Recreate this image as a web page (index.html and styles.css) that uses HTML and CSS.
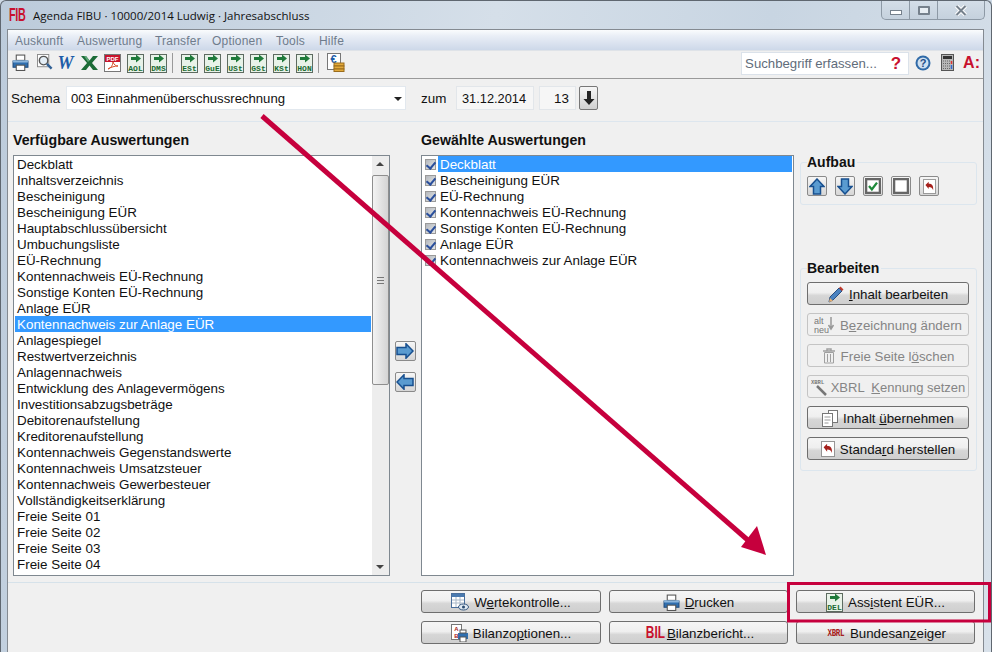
FILE: index.html
```html
<!DOCTYPE html>
<html lang="de">
<head>
    <meta charset="UTF-8">
    <title>Agenda FIBU</title>
    <link rel="stylesheet" href="styles.css">
</head>
<body>
    <svg class="defs" width="0" height="0">
        <symbol id="printer" viewBox="0 0 16 16">
            <rect x="4" y="1" width="8" height="5" fill="#fff" stroke="#555"/>
            <path d="M1 6.5h14v6H1z" fill="#2f6fb0" stroke="#1d4a7c"/>
            <rect x="1" y="6" width="14" height="2" fill="#8db6dc"/>
            <rect x="4" y="10.5" width="8" height="5" fill="#fff" stroke="#555"/>
        </symbol>
        <symbol id="box-arrow" viewBox="0 0 17 20">
            <rect x="0.5" y="1.5" width="16" height="18" fill="#e8f2e8" stroke="#5d6b60"/>
            <path d="M4 4h5V1.5L14 5.5 9 9.500V7H4z" fill="#1f7a3a"/>
        </symbol>
        <symbol id="undo" viewBox="0 0 16 18">
            <rect x="0.500" y="0.500" width="15" height="17" fill="#fff" stroke="#888"/>
            <path d="M3 7l4-4v2.500c4 0 6 2 5.500 8-1-3-2.500-4-5.500-4V12z" fill="#a5201c"/>
        </symbol>
    </svg>

    <div class="window">
        <div class="titlebar">
            <span class="fib">FIB</span>
            <span class="title">Agenda FIBU · 10000/2014 Ludwig · Jahresabschluss</span>
            <div class="win-btns">
                <span class="win-btn"><i class="min"></i></span>
                <span class="win-btn"><i class="max"></i></span>
                <span class="win-btn close">
                    <svg width="12" height="11" viewBox="0 0 12 11"><path d="M1.500 1l9 9M10.500 1l-9 9" stroke="#fff" stroke-width="4"/><path d="M1.500 1l9 9M10.500 1l-9 9" stroke="#76818c" stroke-width="2"/></svg>
                </span>
            </div>
        </div>

        <div class="client">
            <div class="menubar">
                <span class="m1">Auskunft</span>
                <span class="m2">Auswertung</span>
                <span class="m3">Transfer</span>
                <span class="m4">Optionen</span>
                <span class="m5">Tools</span>
                <span>Hilfe</span>
            </div>

            <div class="toolbar">
                <svg class="tool t-print" width="17" height="17"><use href="#printer"/></svg>
                <svg class="tool t-find" width="16" height="17" viewBox="0 0 17 18"><rect x="0.500" y="0.500" width="12" height="13" fill="#fff" stroke="#8a8a8a"/><circle cx="7" cy="7" r="4.500" fill="#e4eef6" stroke="#555" stroke-width="1.500"/><path d="M10.500 10.500l5 5" stroke="#2f5f94" stroke-width="2.500"/></svg>
                <span class="tool w-ico">W</span>
                <svg class="tool" width="17" height="16" viewBox="0 0 17 16"><path d="M0 1h5l3.500 4.500L12 1h5l-6 7 6 7h-5L8.500 10.500 5 15H0l6-7z" fill="#1c6b36"/><path d="M3 1h2l3.500 4.500L7 7z" fill="#5fa777"/></svg>
                <svg class="tool" width="17" height="18" viewBox="0 0 17 18"><rect x="0.500" y="0.500" width="16" height="17" fill="#fff" stroke="#777"/><rect x="1" y="1" width="15" height="7" fill="#c8142c"/><text x="8.500" y="7" class="pdf-txt">PDF</text><path d="M4 15c3-1 5-4 5-7 1 3 3 4 5 4-3 0-7 1-10 3z" fill="none" stroke="#d8502a"/></svg>
                <svg class="tool box" width="17" height="20"><use href="#box-arrow"/><text x="8.500" y="18" class="box-txt">AOL</text></svg>
                <svg class="tool box" width="17" height="20"><use href="#box-arrow"/><text x="8.500" y="18" class="box-txt">DMS</text></svg>
                <span class="tool-sep"></span>
                <svg class="tool box" width="17" height="20"><use href="#box-arrow"/><text x="8.500" y="18" class="box-txt">ESt</text></svg>
                <svg class="tool box" width="17" height="20"><use href="#box-arrow"/><text x="8.500" y="18" class="box-txt">GuE</text></svg>
                <svg class="tool box" width="17" height="20"><use href="#box-arrow"/><text x="8.500" y="18" class="box-txt">USt</text></svg>
                <svg class="tool box" width="17" height="20"><use href="#box-arrow"/><text x="8.500" y="18" class="box-txt">GSt</text></svg>
                <svg class="tool box" width="17" height="20"><use href="#box-arrow"/><text x="8.500" y="18" class="box-txt">KSt</text></svg>
                <svg class="tool box" width="17" height="20"><use href="#box-arrow"/><text x="8.500" y="18" class="box-txt">HON</text></svg>
                <span class="tool-sep"></span>
                <svg class="tool" width="18" height="19" viewBox="0 0 18 19"><rect x="0.500" y="0.500" width="13" height="16" fill="#fff" stroke="#777"/><text x="6.500" y="10" class="euro-txt">€</text><rect x="7" y="10" width="10" height="3" fill="#e2a93a" stroke="#9a6c1c"/><rect x="7" y="13" width="10" height="3" fill="#e2a93a" stroke="#9a6c1c"/><rect x="7" y="16" width="10" height="2.500" fill="#e2a93a" stroke="#9a6c1c"/></svg>

                <div class="search">
                    <span>Suchbegriff erfassen...</span>
                    <b>?</b>
                </div>
                <svg class="help" width="16" height="16" viewBox="0 0 16 16"><circle cx="8" cy="8" r="7.500" fill="#2f6aa8"/><circle cx="8" cy="8" r="5.500" fill="#cfe0f0"/><text x="8" y="12" class="help-txt">?</text></svg>
                <svg class="calc" width="13" height="17" viewBox="0 0 13 17"><rect x="0.500" y="0.500" width="12" height="16" fill="#b8b8b8" stroke="#555"/><rect x="2" y="2" width="9" height="3" fill="#333"/><path d="M2 7h7M2 9.500h7M2 12h7M2 14.500h7" stroke="#666" stroke-dasharray="1 1"/><path d="M10.500 7v3" stroke="#d33" stroke-width="1.500"/><path d="M10.500 11v4" stroke="#36c" stroke-width="1.500"/></svg>
                <span class="a-logo">A:</span>
            </div>

            <div class="schema-row">
                <label class="schema-label">Schema</label>
                <div class="select">003 Einnahmenüberschussrechnung<i></i></div>
                <label class="zum-label">zum</label>
                <div class="field date">31.12.2014</div>
                <div class="field num">13</div>
                <span class="down-btn">
                    <svg width="12" height="16" viewBox="0 0 12 16"><path d="M4 1h4v8h3.500L6 15 .5 9H4z" fill="#222"/></svg>
                </span>
            </div>

            <div class="main">
                <div class="col">
                    <h3>Verfügbare Auswertungen</h3>
                    <div class="listbox">
                        <ul class="items">
                            <li>Deckblatt</li>
                            <li>Inhaltsverzeichnis</li>
                            <li>Bescheinigung</li>
                            <li>Bescheinigung EÜR</li>
                            <li>Hauptabschlussübersicht</li>
                            <li>Umbuchungsliste</li>
                            <li>EÜ-Rechnung</li>
                            <li>Kontennachweis EÜ-Rechnung</li>
                            <li>Sonstige Konten EÜ-Rechnung</li>
                            <li>Anlage EÜR</li>
                            <li class="selected">Kontennachweis zur Anlage EÜR</li>
                            <li>Anlagespiegel</li>
                            <li>Restwertverzeichnis</li>
                            <li>Anlagennachweis</li>
                            <li>Entwicklung des Anlagevermögens</li>
                            <li>Investitionsabzugsbeträge</li>
                            <li>Debitorenaufstellung</li>
                            <li>Kreditorenaufstellung</li>
                            <li>Kontennachweis Gegenstandswerte</li>
                            <li>Kontennachweis Umsatzsteuer</li>
                            <li>Kontennachweis Gewerbesteuer</li>
                            <li>Vollständigkeitserklärung</li>
                            <li>Freie Seite 01</li>
                            <li>Freie Seite 02</li>
                            <li>Freie Seite 03</li>
                            <li>Freie Seite 04</li>
                        </ul>
                        <div class="scrollbar">
                            <span class="sb-up"></span>
                            <div class="sb-track">
                                <div class="sb-thumb"><i></i></div>
                            </div>
                            <span class="sb-down"></span>
                        </div>
                    </div>
                </div>

                <div class="move-btns">
                    <span class="icon-btn move">
                        <svg width="18" height="16" viewBox="0 0 18 16"><path d="M1 4.500h9V.8L17 8l-7 7.200V11.500H1z" fill="#5a9bd0" stroke="#174f8f" stroke-width="1.500"/></svg>
                    </span>
                    <span class="icon-btn move">
                        <svg width="18" height="16" viewBox="0 0 18 16"><path d="M17 4.500H8V.8L1 8l7 7.200V11.500h9z" fill="#5a9bd0" stroke="#174f8f" stroke-width="1.500"/></svg>
                    </span>
                </div>

                <div class="col">
                    <h3>Gewählte Auswertungen</h3>
                    <div class="listbox chosen">
                        <ul class="items">
                            <li><i class="check"></i><span class="selected">Deckblatt</span></li>
                            <li><i class="check"></i><span>Bescheinigung EÜR</span></li>
                            <li><i class="check"></i><span>EÜ-Rechnung</span></li>
                            <li><i class="check"></i><span>Kontennachweis EÜ-Rechnung</span></li>
                            <li><i class="check"></i><span>Sonstige Konten EÜ-Rechnung</span></li>
                            <li><i class="check"></i><span>Anlage EÜR</span></li>
                            <li><i class="check"></i><span>Kontennachweis zur Anlage EÜR</span></li>
                        </ul>
                    </div>
                </div>

                <div class="side">
                    <fieldset class="group aufbau">
                        <legend>Aufbau</legend>
                        <div class="icon-row">
                            <span class="icon-btn">
                                <svg width="16" height="17" viewBox="0 0 16 17"><path d="M8 1l7 7.500h-3.500V16h-7V8.500H1z" fill="#5a9bd0" stroke="#174f8f" stroke-width="1.500"/></svg>
                            </span>
                            <span class="icon-btn">
                                <svg width="16" height="17" viewBox="0 0 16 17"><path d="M8 16l7-7.500h-3.500V1h-7v7.500H1z" fill="#5a9bd0" stroke="#174f8f" stroke-width="1.500"/></svg>
                            </span>
                            <span class="icon-btn">
                                <svg width="16" height="16" viewBox="0 0 14 14"><rect x="1" y="1" width="12" height="12" fill="#fff" stroke="#666" stroke-width="2"/><path d="M3.500 7l2.500 3 4.500-6" fill="none" stroke="#1f8a3a" stroke-width="2"/></svg>
                            </span>
                            <span class="icon-btn">
                                <svg width="16" height="16" viewBox="0 0 14 14"><rect x="1" y="1" width="12" height="12" fill="#fff" stroke="#666" stroke-width="2"/></svg>
                            </span>
                            <span class="icon-btn">
                                <svg width="13" height="15"><use href="#undo"/></svg>
                            </span>
                        </div>
                    </fieldset>

                    <fieldset class="group bearbeiten">
                        <legend>Bearbeiten</legend>
                        <div class="btn-stack">
                            <button class="btn">
                                <svg width="16" height="17" viewBox="0 0 16 17"><path d="M1 16l1-5L11 2l3 3-9 9z" fill="#4a82c0" stroke="#2a4f80"/><path d="M11 2l1.500-1.500 3 3L14 5z" fill="#c0392b"/><path d="M1 16l1-4 3 3z" fill="#e8b070"/></svg>
                                <span><u>I</u>nhalt bearbeiten</span>
                            </button>
                            <button class="btn off">
                                <svg width="21" height="18" viewBox="0 0 21 18"><text x="0" y="8" class="altneu">alt</text><text x="0" y="17" class="altneu">neu</text><path d="M17 1v11M14.500 9l2.500 4 2.500-4" fill="none" stroke="#999" stroke-width="1.500"/></svg>
                                <span>B<u>e</u>zeichnung ändern</span>
                            </button>
                            <button class="btn off">
                                <svg width="14" height="16" viewBox="0 0 14 16"><path d="M1 3h12M5 3V1h4v2" fill="none" stroke="#a0a0a0" stroke-width="1.500"/><path d="M2.500 4.500h9V15h-9zM5.500 6v8M8.500 6v8" fill="none" stroke="#a0a0a0"/></svg>
                                <span>Freie Seite l<u>ö</u>schen</span>
                            </button>
                            <button class="btn off xbrl-btn">
                                <svg width="18" height="18" viewBox="0 0 18 18"><text x="0" y="6" class="xbrl-small">XBRL</text><path d="M6 8l9 9" stroke="#777" stroke-width="2.500"/></svg>
                                <span>XBRL &nbsp;<u>K</u>ennung setzen</span>
                            </button>
                            <button class="btn">
                                <svg width="16" height="17" viewBox="0 0 16 17"><rect x="6.500" y="0.500" width="9" height="12" fill="#fff" stroke="#777"/><rect x="0.500" y="3.500" width="10" height="13" fill="#fff" stroke="#777"/><path d="M2.500 7h6M2.500 10h6M2.500 13h4" stroke="#999"/></svg>
                                <span>Inhalt <u>ü</u>bernehmen</span>
                            </button>
                            <button class="btn">
                                <svg width="14" height="16"><use href="#undo"/></svg>
                                <span>Standa<u>r</u>d herstellen</span>
                            </button>
                        </div>
                    </fieldset>
                </div>
            </div>

            <div class="bottom">
                <button class="btn">
                    <svg width="18" height="18" viewBox="0 0 18 18"><rect x="0.500" y="0.500" width="13" height="14" fill="#fff" stroke="#4a6f9c"/><rect x="1" y="1" width="12" height="3" fill="#4a7ab0"/><path d="M1 7h12M1 10h12M5 4v10M9 4v10" stroke="#a9b8c8"/><ellipse cx="12.500" cy="14" rx="5" ry="3" fill="#dfe9f2" stroke="#3a5a80"/><circle cx="12.500" cy="14" r="1.500" fill="#2a4a70"/></svg>
                    <span>W<u>e</u>rtekontrolle...</span>
                </button>
                <button class="btn">
                    <svg width="17" height="17"><use href="#printer"/></svg>
                    <span><u>D</u>rucken</span>
                </button>
                <button class="btn">
                    <svg width="17" height="20" viewBox="0 0 17 20"><use href="#box-arrow" width="17" height="20"/><text x="8.500" y="18" class="box-txt">DEL</text></svg>
                    <span>Ass<u>i</u>stent EÜR...</span>
                </button>
                <button class="btn">
                    <svg width="17" height="18" viewBox="0 0 17 18"><rect x="0.500" y="0.500" width="10" height="15" fill="#fff" stroke="#777"/><text x="5.500" y="7" class="ab-txt">A</text><text x="5.500" y="14" class="ab-txt">B</text><rect x="7" y="9" width="10" height="6" fill="#2f6fb0"/><rect x="9" y="13" width="6" height="5" fill="#fff" stroke="#555"/><rect x="9" y="6" width="6" height="3" fill="#fff" stroke="#555"/></svg>
                    <span>Bilanzo<u>p</u>tionen...</span>
                </button>
                <button class="btn">
                    <span class="bil-logo">BIL</span>
                    <span><u>B</u>ilanzbericht...</span>
                </button>
                <button class="btn">
                    <span class="xbrl-logo">XBRL</span>
                    <span>Bundesan<u>z</u>eiger</span>
                </button>
            </div>
        </div>
    </div>

    <!-- annotation on top of the screenshot -->
    <svg class="annotation" width="992" height="652" viewBox="0 0 992 652">
        <path d="M262 116L750 542" stroke="#c6003d" stroke-width="5" fill="none"/>
        <path d="M766 555L741 547 757 526z" fill="#c6003d"/>
        <rect x="788.500" y="583.500" width="201" height="37.500" fill="none" stroke="#c6003d" stroke-width="3"/>
    </svg>
</body>
</html>
```

FILE: styles.css
```css
* {
    margin: 0;
    padding: 0;
    box-sizing: border-box;
}

body {
    width: 992px;
    height: 652px;
    overflow: hidden;
    position: relative;
    font-family: "Liberation Sans", Arial, sans-serif;
    font-size: 13.4px;
    color: #111;
    background: #cdd9e5;
}

.defs {
    position: absolute;
}

/* window frame */
.window {
    height: 652px;
    padding: 0 7px 0 6px;
    background: linear-gradient(100deg, #bccbdb 0%, #d5dfe9 45%, #c8d5e2 70%, #d8e1ea 100%);
    border: 1px solid #5f6770;
    border-bottom: none;
    border-radius: 6px 6px 0 0;
}

.titlebar {
    height: 28px;
    margin: 0 -7px 0 -6px;
    padding: 0 6px 0 8px;
    display: flex;
    align-items: center;
}

.fib {
    width: 24px;
    color: #c8102e;
    font: bold 18px "Liberation Sans", sans-serif;
    transform: scaleX(0.6);
    transform-origin: left center;
    letter-spacing: -0.5px;
}

.title {
    font-family: "Open Sans", sans-serif;
    font-size: 11.5px;
    color: #111;
}

.win-btns {
    margin-left: auto;
    margin-top: -9px;
    display: flex;
    height: 19px;
    border: 1px solid #8d99a5;
    border-top: none;
    border-radius: 0 0 5px 5px;
    background: linear-gradient(#d4dee8, #c5d1dd);
}

.win-btn {
    width: 28px;
    display: flex;
    align-items: center;
    justify-content: center;
    border-right: 1px solid #8d99a5;
}

.win-btn.close {
    width: 46px;
    border-right: none;
}

.win-btn .min {
    display: block;
    width: 12px;
    height: 5px;
    margin-top: 5px;
    background: #fff;
    border: 1px solid #76818c;
}

.win-btn .max {
    display: block;
    width: 12px;
    height: 9px;
    background: #e8eef3;
    border: 2px solid #76818c;
    border-radius: 1px;
}

/* client area */
.client {
    height: 623px;
    background: #f0f0f0;
    border: 1px solid #848a91;
    border-bottom: none;
}

.menubar {
    height: 20px;
    display: flex;
    align-items: center;
    padding: 2px 0 0 7px;
    font-size: 12px;
    color: #6f7c8c;
    letter-spacing: 0.2px;
    background: linear-gradient(#fafcfd 0%, #e9eef6 30%, #cdd8e9 100%);
}

.menubar span {
    width: 62px;
}

.menubar .m1 { width: 62px; }
.menubar .m2 { width: 78px; }
.menubar .m3 { width: 57px; }
.menubar .m4 { width: 64px; }
.menubar .m5 { width: 43px; }

.toolbar {
    height: 29px;
    display: flex;
    align-items: center;
    padding: 0 3px 4px 4px;
    background: #f0f0f0;
    border-top: 1px solid #dfe3e8;
    border-bottom: 1px solid #9a9a9a;
}

.tool {
    flex: none;
    margin-right: 6px;
}

.t-print {
    margin-right: 8px;
}

.t-find {
    margin-right: 4px;
}

.w-ico {
    width: 17px;
    margin-right: 7px;
    color: #1d5ca8;
    font: italic bold 18px "Liberation Serif", serif;
    text-align: center;
    line-height: 18px;
}

.pdf-txt {
    font: bold 6px "Liberation Sans", sans-serif;
    fill: #fff;
    text-anchor: middle;
}

.box-txt {
    font: bold 8px "Liberation Mono", monospace;
    fill: #1a6b33;
    text-anchor: middle;
}

.euro-txt {
    font: bold 11px "Liberation Sans", sans-serif;
    fill: #1d5ca8;
    text-anchor: middle;
}

.tool-sep {
    flex: none;
    width: 1px;
    height: 20px;
    margin: 0 8px 0 -1px;
    background: #9a9a9a;
}

.search {
    flex: none;
    width: 168px;
    height: 23px;
    margin-left: auto;
    margin-top: 2px;
    padding: 0 4px 0 3px;
    display: flex;
    align-items: center;
    justify-content: space-between;
    background: #fff;
    border: 1px solid #dbe2ea;
    color: #5f6c7a;
    font-size: 13.2px;
}

.search b {
    color: #c8102e;
    font-size: 17px;
    margin-right: 3px;
}

.help {
    flex: none;
    margin-left: 6px;
}

.help-txt {
    font: bold 11px "Liberation Sans", sans-serif;
    fill: #1f4f88;
    text-anchor: middle;
}

.calc {
    flex: none;
    margin-left: 10px;
}

.a-logo {
    flex: none;
    margin-left: 9px;
    color: #c8102e;
    font-size: 16px;
    font-weight: bold;
}

/* schema row */
.schema-row {
    display: flex;
    align-items: center;
    height: 43px;
    padding: 0 0 4px 3px;
    border-bottom: 1px solid #dde6ee;
}

.schema-label {
    width: 55px;
}

.select {
    position: relative;
    width: 340px;
    height: 24px;
    line-height: 23px;
    padding-left: 4px;
    font-size: 13.15px;
    background: #fff;
    border: 1px solid #e2e8ee;
}

.select i {
    position: absolute;
    right: 3px;
    top: 10px;
    border: 4px solid transparent;
    border-top-color: #222;
}

.zum-label {
    margin-left: 15px;
    width: 35px;
}

.field {
    height: 24px;
    line-height: 23px;
    background: #f6f6f6;
    border: 1px solid #e2e6ea;
}

.date {
    width: 78px;
    margin-right: 5px;
    padding-left: 5px;
    font-size: 12.8px;
}

.num {
    width: 37px;
    padding-right: 6px;
    text-align: right;
}

.down-btn {
    width: 19px;
    height: 24px;
    margin-left: 3px;
    display: flex;
    align-items: center;
    justify-content: center;
    border: 1px solid #777;
    border-radius: 2px;
    background: linear-gradient(#f6f6f6, #d0d0d0);
}

/* lists */
.main {
    display: grid;
    grid-template-columns: 377px 31px 373px 183px;
    height: 460px;
    padding: 9px 0 0 5px;
}

.col h3 {
    height: 24px;
    font-size: 14.2px;
    line-height: 19px;
    font-weight: bold;
}

.listbox {
    height: 421px;
    display: flex;
    background: #fff;
    border: 1px solid #7f8890;
    overflow: hidden;
}

.items {
    flex: 1;
    list-style: none;
    padding: 0 1px;
}

.items li {
    height: 16px;
    line-height: 17px;
    padding-left: 2px;
    white-space: nowrap;
}

.items li.selected {
    background: #3399ff;
    color: #fff;
}

.chosen .items li {
    display: flex;
    align-items: center;
    padding-left: 2px;
}

.chosen .items span {
    flex: 1;
    height: 16px;
    padding-left: 2px;
}

.chosen .items span.selected {
    background: #3399ff;
    color: #fff;
}

.check {
    width: 11px;
    height: 11px;
    margin-right: 2px;
    flex: none;
    border: 1px solid #9a9a9a;
    background: #c9cdd2 linear-gradient(135deg, #b4b8bd, #e4e6e8);
    position: relative;
}

.check::after {
    content: "";
    position: absolute;
    left: 2px;
    top: 0;
    width: 4px;
    height: 7px;
    border: solid #2a4f9c;
    border-width: 0 2px 2px 0;
    transform: rotate(40deg);
}

.scrollbar {
    width: 17px;
    flex: none;
    display: flex;
    flex-direction: column;
    background: #ededed;
}

.sb-up, .sb-down {
    height: 17px;
    position: relative;
    flex: none;
}

.sb-up::after, .sb-down::after {
    content: "";
    position: absolute;
    left: 4px;
    border: 4px solid transparent;
}

.sb-up::after {
    top: 2px;
    border-bottom-color: #444;
}

.sb-down::after {
    top: 7px;
    border-top-color: #444;
}

.sb-track {
    flex: 1;
}

.sb-thumb {
    height: 210px;
    margin-top: 2px;
    display: flex;
    align-items: center;
    justify-content: center;
    border: 1px solid #8e8e8e;
    border-radius: 2px;
    background: linear-gradient(90deg, #f3f3f3, #d4d4d4);
}

.sb-thumb i {
    width: 7px;
    height: 7px;
    border-top: 1px solid #777;
    border-bottom: 1px solid #777;
    background: linear-gradient(#777, #777) center / 100% 1px no-repeat;
}

.move-btns {
    display: flex;
    flex-direction: column;
    align-items: center;
    gap: 11px;
    padding: 210px 1px 0 0;
}

.icon-btn {
    width: 20px;
    height: 20px;
    display: flex;
    align-items: center;
    justify-content: center;
    border: 1px solid #8a8a8a;
    border-radius: 2px;
    background: linear-gradient(#f6f6f6, #d6d6d6);
}

.icon-btn.move {
    width: 21px;
}

/* right column */
.side {
    padding-left: 6px;
}

.group {
    border: 1px solid #dce6ee;
    border-radius: 3px;
    padding: 0 7px 0 6px;
}

.group legend {
    padding-right: 2px;
    font-weight: bold;
    font-size: 14px;
    line-height: 16px;
}

.aufbau {
    height: 51px;
    margin-top: 23px;
}

.icon-row {
    display: flex;
    gap: 8px;
    padding-top: 6px;
}

.bearbeiten {
    height: 211px;
    margin-top: 55px;
}

.btn-stack {
    display: flex;
    flex-direction: column;
    gap: 8px;
    padding-top: 6px;
}

.btn {
    height: 23px;
    padding-top: 1px;
    display: flex;
    align-items: center;
    justify-content: center;
    gap: 5px;
    font-family: "Liberation Sans", Arial, sans-serif;
    font-size: 13.3px;
    color: #111;
    border: 1px solid #6e6e6e;
    border-radius: 3px;
    background: linear-gradient(#f5f5f5 0%, #efefef 45%, #d6d6d6 60%, #cfcfcf 100%);
    white-space: nowrap;
    overflow: hidden;
}

.btn.off {
    color: #858585;
    border-color: #c4c4c4;
    background: #f0f0f0;
}

.altneu {
    font: 9px "Liberation Sans", sans-serif;
    fill: #777;
}

.xbrl-small {
    font: bold 5.500px "Liberation Mono", monospace;
    fill: #777;
}

.xbrl-btn {
    gap: 2px;
    font-size: 13px;
}

/* bottom buttons */
.bottom {
    display: grid;
    grid-template-columns: 180px 179px 179px;
    grid-auto-rows: 23px;
    column-gap: 8px;
    row-gap: 8px;
    padding: 7px 0 0 413px;
    border-top: 1px solid #d6e2ea;
}

.ab-txt {
    font: bold 6px "Liberation Sans", sans-serif;
    fill: #a5201c;
    text-anchor: middle;
}

.bil-logo {
    color: #c8102e;
    font: bold 17px "Liberation Sans", sans-serif;
    transform: scaleX(0.7);
    width: 19px;
    display: inline-block;
}

.xbrl-logo {
    color: #a5201c;
    font: bold 10px "Liberation Mono", monospace;
    transform: scaleX(0.75);
    width: 20px;
    letter-spacing: -0.5px;
}

.annotation {
    position: absolute;
    left: 0;
    top: 0;
    pointer-events: none;
}
```
